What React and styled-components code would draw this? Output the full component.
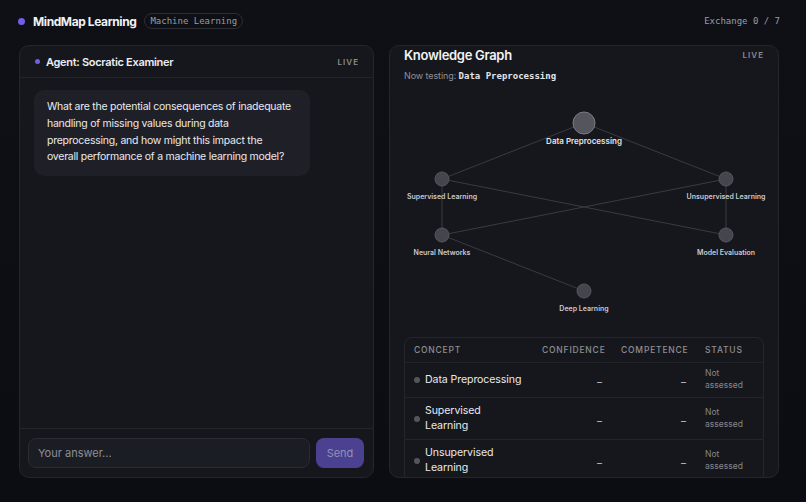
import React from 'react';
import styled, { createGlobalStyle } from 'styled-components';

const SANS = `Inter, "Noto Sans", "Liberation Sans", sans-serif`;
const MONO = `"DejaVu Sans Mono", "Liberation Mono", monospace`;

const nodes = [
  { id: 'dp', label: 'Data Preprocessing', x: 180, y: 31, main: true },
  { id: 'sl', label: 'Supervised Learning', x: 38, y: 87 },
  { id: 'ul', label: 'Unsupervised Learning', x: 322, y: 87 },
  { id: 'nn', label: 'Neural Networks', x: 38, y: 143 },
  { id: 'me', label: 'Model Evaluation', x: 322, y: 143 },
  { id: 'dl', label: 'Deep Learning', x: 180, y: 199 },
];

const edges = [
  ['dp', 'sl'], ['dp', 'ul'], ['sl', 'nn'], ['sl', 'me'],
  ['ul', 'nn'], ['ul', 'me'], ['nn', 'dl'],
];

const concepts = ['Data Preprocessing', 'Supervised Learning', 'Unsupervised Learning'];

function Graph() {
  const byId = Object.fromEntries(nodes.map((n) => [n.id, n]));
  return (
    <GraphSvg viewBox="0 0 360 230" width="360" height="230">
      {edges.map(([a, b]) => (
        <line
          key={a + b}
          x1={byId[a].x} y1={byId[a].y} x2={byId[b].x} y2={byId[b].y}
          stroke="#3a3b42" strokeWidth="1"
        />
      ))}
      {nodes.map((n) => (
        <g key={n.id}>
          <circle
            cx={n.x} cy={n.y} r={n.main ? 11 : 7}
            fill={n.main ? '#55565d' : '#45464d'}
            stroke={n.main ? '#7a7b82' : '#55565c'}
            strokeWidth="1"
          />
          <text
            x={n.x} y={n.y + (n.main ? 21 : 20)}
            textAnchor="middle"
            fontFamily={SANS}
            fontSize={n.main ? 8 : 7}
            fontWeight="600"
            fill={n.main ? '#e4e5e9' : '#c9cad0'}
          >
            {n.label}
          </text>
        </g>
      ))}
    </GraphSvg>
  );
}

export default function App() {
  return (
    <>
      <GlobalStyle />
      <Page>
        <TopBar>
          <Brand>
            <Dot size={7} color="#6e5fe6" />
            <BrandName>MindMap Learning</BrandName>
            <Topic>Machine Learning</Topic>
          </Brand>
          <Exchange>Exchange 0 / 7</Exchange>
        </TopBar>
        <Columns>
          <Panel>
            <PanelHead>
              <AgentName>
                <Dot size={5} color="#6e5fe6" />
                Agent: Socratic Examiner
              </AgentName>
              <Live>LIVE</Live>
            </PanelHead>
            <Messages>
              <Bubble>
                What are the potential consequences of inadequate handling of missing values during data
                preprocessing, and how might this impact the overall performance of a machine learning model?
              </Bubble>
            </Messages>
            <Composer>
              <AnswerInput placeholder="Your answer..." />
              <SendButton>Send</SendButton>
            </Composer>
          </Panel>
          <GraphPanel>
            <GraphHead>
              <GraphTitle>Knowledge Graph</GraphTitle>
              <Live>LIVE</Live>
            </GraphHead>
            <Testing>
              Now testing: <code>Data Preprocessing</code>
            </Testing>
            <Graph />
            <Table>
              <HeadRow>
                <HeadCell>Concept</HeadCell>
                <HeadCell>Confidence</HeadCell>
                <HeadCell>Competence</HeadCell>
                <HeadCell>Status</HeadCell>
              </HeadRow>
              {concepts.map((c) => (
                <Row key={c}>
                  <ConceptCell>
                    <Dot size={6} color="#55565c" />
                    <ConceptName>{c}</ConceptName>
                  </ConceptCell>
                  <ValueCell>–</ValueCell>
                  <ValueCell>–</ValueCell>
                  <StatusCell>Not assessed</StatusCell>
                </Row>
              ))}
            </Table>
          </GraphPanel>
        </Columns>
      </Page>
    </>
  );
}

const GlobalStyle = createGlobalStyle`
  html, body {
    margin: 0;
    padding: 0;
    background: #0c0d12;
  }
  body {
    font-family: ${SANS};
    color: #e6e7eb;
  }
`;

const Page = styled.div`
  width: 806px;
  height: 502px;
  overflow: hidden;
  background: linear-gradient(180deg, #0e1016 0%, #0c0d12 100%);
  display: flex;
  flex-direction: column;
`;

const TopBar = styled.div`
  height: 45px;
  display: flex;
  align-items: center;
  justify-content: space-between;
  padding: 0 26px 3px 18px;
  box-sizing: border-box;
`;

const Brand = styled.div`
  display: flex;
  align-items: center;
`;

const Dot = styled.span`
  width: ${(p) => p.size}px;
  height: ${(p) => p.size}px;
  border-radius: 50%;
  background: ${(p) => p.color};
  flex-shrink: 0;
`;

const BrandName = styled.span`
  margin-left: 8px;
  font-size: 12px;
  font-weight: 700;
  letter-spacing: -0.4px;
  color: #f1f2f5;
`;

const Topic = styled.span`
  margin-left: 8px;
  font-family: ${MONO};
  font-size: 9px;
  color: #9a9ba3;
  border: 1px solid #2c2d34;
  border-radius: 8px;
  padding: 2px 5px;
`;

const Exchange = styled.span`
  font-family: ${MONO};
  font-size: 9px;
  color: #9a9ba3;
`;

const Columns = styled.div`
  display: grid;
  grid-template-columns: 355px 390px;
  gap: 15px;
  padding: 0 19px;
  height: 433px;
`;

const Panel = styled.div`
  background: #16171c;
  border: 1px solid #25262d;
  border-radius: 10px;
  display: flex;
  flex-direction: column;
  overflow: hidden;
`;

const PanelHead = styled.div`
  height: 31px;
  flex-shrink: 0;
  display: flex;
  align-items: center;
  justify-content: space-between;
  padding: 0 14px 0 15px;
  border-bottom: 1px solid #24252b;
`;

const AgentName = styled.div`
  display: flex;
  align-items: center;
  gap: 6px;
  font-size: 11px;
  font-weight: 600;
  letter-spacing: -0.3px;
  color: #eceef2;
`;

const Live = styled.span`
  font-size: 8px;
  font-weight: 600;
  letter-spacing: 1px;
  color: #8b8c94;
`;

const Messages = styled.div`
  flex: 1;
  padding: 12px 14px;
`;

const Bubble = styled.div`
  width: fit-content;
  max-width: 247px;
  background: #1f2027;
  border-radius: 10px;
  padding: 9px 16px 10px 13px;
  font-size: 10.5px;
  letter-spacing: -0.25px;
  line-height: 16.8px;
  color: #e9eaee;
`;

const Composer = styled.div`
  flex-shrink: 0;
  display: flex;
  gap: 6px;
  padding: 9px 9px 9px 8px;
  border-top: 1px solid #24252b;
`;

const AnswerInput = styled.input`
  flex: 1;
  height: 30px;
  box-sizing: border-box;
  background: #1b1d24;
  border: 1px solid #2a2c33;
  border-radius: 8px;
  padding: 0 9px;
  font-family: ${SANS};
  font-size: 11px;
  color: #e6e7eb;
  outline: none;
  &::placeholder {
    color: #8d8e96;
  }
`;

const SendButton = styled.button`
  width: 48px;
  height: 30px;
  border: none;
  border-radius: 8px;
  background: #4a4290;
  font-family: ${SANS};
  font-size: 11px;
  color: #9390b8;
`;

const GraphPanel = styled(Panel)`
  padding: 0 14px;
`;

const GraphHead = styled.div`
  display: flex;
  align-items: center;
  justify-content: space-between;
  padding-top: 1px;
  height: 17px;
`;

const GraphTitle = styled.span`
  font-size: 13px;
  font-weight: 600;
  letter-spacing: -0.3px;
  color: #f1f2f5;
`;

const Testing = styled.div`
  margin-top: 7px;
  font-size: 9px;
  letter-spacing: -0.1px;
  color: #8e8f97;
  code {
    font-family: ${MONO};
    font-weight: 700;
    letter-spacing: 0;
    color: #e3e4e8;
  }
`;

const GraphSvg = styled.svg`
  display: block;
  margin-top: 11px;
  flex-shrink: 0;
  overflow: visible;
`;

const Table = styled.div`
  margin-top: 15px;
  border: 1px solid #25262d;
  border-radius: 8px;
  flex-shrink: 0;
`;

const HeadRow = styled.div`
  display: grid;
  grid-template-columns: 128px 79px 84px 1fr;
  height: 24px;
  align-items: center;
  border-bottom: 1px solid #222329;
`;

const HeadCell = styled.div`
  padding-left: 9px;
  font-size: 8.5px;
  font-weight: 500;
  letter-spacing: 0.8px;
  text-transform: uppercase;
  color: #8d8e96;
`;

const Row = styled.div`
  display: grid;
  grid-template-columns: 128px 79px 84px 1fr;
  align-items: center;
  border-bottom: 1px solid #24252b;
  padding: 6px 0;
`;

const ConceptCell = styled.div`
  display: flex;
  align-items: center;
  gap: 5px;
  padding: 0 4px 0 9px;
  font-size: 10.6px;
  line-height: 14.5px;
  letter-spacing: -0.1px;
  color: #e8e9ed;
`;

const ConceptName = styled.span`
  max-width: 98px;
`;

const ValueCell = styled.div`
  text-align: right;
  padding-right: 10px;
  font-size: 10px;
  color: #c8c9cf;
  margin-top: 4px;
`;

const StatusCell = styled.div`
  padding: 0 10px 0 9px;
  font-size: 8.5px;
  line-height: 12px;
  color: #85868e;
  margin-top: -2px;
`;
